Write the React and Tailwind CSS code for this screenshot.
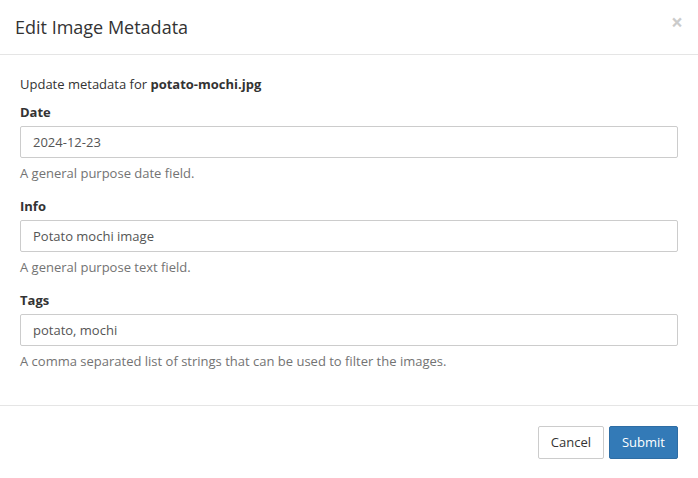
import React, { useState } from 'react';

const font = { fontFamily: '"Open Sans", "Liberation Sans", sans-serif' };

function Field({ label, value, help, onChange }) {
  return (
    <div className="mb-[15px]">
      <label className="block font-bold text-[13px] leading-[18px] mb-[5px] text-[#333]">{label}</label>
      <input
        type="text"
        value={value}
        onChange={(e) => onChange(e.target.value)}
        className="block w-full h-[32px] px-[12px] text-[13px] text-[#555] bg-white border border-[#ccc] rounded-[2px] outline-none"
      />
      <p className="mt-[6px] text-[13px] leading-[18px] text-[#737373]">{help}</p>
    </div>
  );
}

export default function App() {
  const [date, setDate] = useState('2024-12-23');
  const [info, setInfo] = useState('Potato mochi image');
  const [tags, setTags] = useState('potato, mochi');

  return (
    <div className="w-[698px] h-[478px] bg-white text-[#333]" style={font}>
      {/* header */}
      <div className="h-[55px] flex items-center justify-between pl-[15px] pr-[15px] border-b border-[#e5e5e5]">
        <h4 className="text-[18px] leading-[26px] text-[#333]">Edit Image Metadata</h4>
        <button className="text-[21px] font-bold leading-none text-black opacity-20 -mt-[10px]">×</button>
      </div>

      {/* body */}
      <div className="px-[20px] pt-[20px] pb-[20px]">
        <p className="text-[13px] leading-[18px] mb-[10px]">
          Update metadata for <strong className="font-bold">potato-mochi.jpg</strong>
        </p>
        <Field label="Date" value={date} onChange={setDate} help="A general purpose date field." />
        <Field label="Info" value={info} onChange={setInfo} help="A general purpose text field." />
        <Field
          label="Tags"
          value={tags}
          onChange={setTags}
          help="A comma separated list of strings that can be used to filter the images."
        />
      </div>

      {/* footer */}
      <div className="border-t border-[#e5e5e5] p-[20px] flex justify-end gap-[5px]">
        <button className="h-[33px] px-[12px] text-[13px] text-[#333] bg-white border border-[#ccc] rounded-[2px]">
          Cancel
        </button>
        <button className="h-[33px] px-[12px] text-[13px] text-white bg-[#337ab7] border border-[#2e6da4] rounded-[2px]">
          Submit
        </button>
      </div>
    </div>
  );
}
